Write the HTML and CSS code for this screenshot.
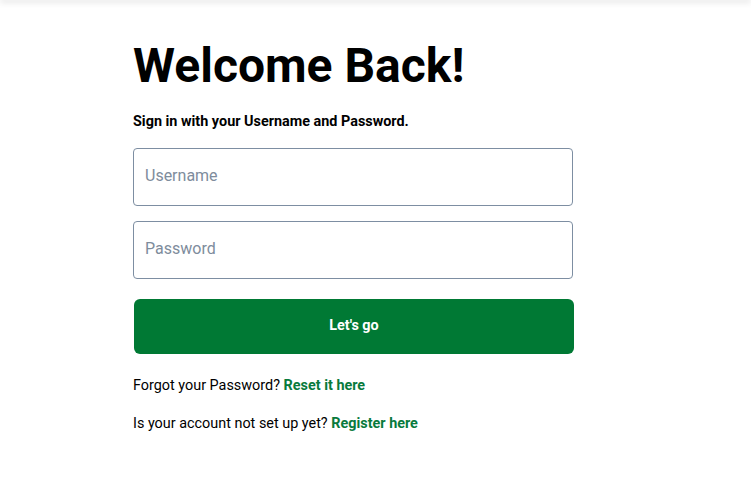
FILE: index.html
```html
<!DOCTYPE html>
<html lang="en">
<head>
<meta charset="utf-8">
<title>Sign in</title>
<link rel="stylesheet" href="styles.css">
</head>
<body>
<header class="topbar"></header>
<main class="page">
  <form class="login">
    <h1 class="title">Welcome Back!</h1>
    <p class="subtitle">Sign in with your Username and Password.</p>
    <input class="field" type="text" placeholder="Username">
    <input class="field" type="password" placeholder="Password">
    <button class="submit" type="button">Let's go</button>
    <p class="note">Forgot your Password? <a class="link" href="#">Reset it here</a></p>
    <p class="note">Is your account not set up yet? <a class="link" href="#">Register here</a></p>
  </form>
</main>
</body>
</html>
```
FILE: styles.css
```css
* { box-sizing: border-box; }
html, body { margin: 0; padding: 0; background: #fff; }
body { font-family: Roboto, "Liberation Sans", sans-serif; color: #000; }
.topbar {
  height: 1px;
  margin-top: -1px;
  box-shadow: 0 1px 6px rgba(0, 0, 0, 0.45);
}
.page { padding: 38px 0 0 133px; }
.login { width: 440px; display: flex; flex-direction: column; }
.title {
  margin: 0;
  font-size: 48px;
  font-weight: 700;
  line-height: 56px;
}
.subtitle {
  margin: 19px 0 17px;
  font-size: 14.4px;
  font-weight: 700;
  line-height: 18px;
}
.field {
  width: 440px;
  height: 58px;
  margin: 0 0 15px;
  padding: 0 11px 3px;
  border: 1px solid #7d8ea2;
  border-radius: 4px;
  font-family: inherit;
  font-size: 16px;
  color: #000;
  outline: none;
}
.field::placeholder { color: #7e8c9c; }
.submit {
  width: 440px;
  height: 55px;
  margin: 5px 0 0 1px;
  padding: 0 0 2px;
  border: none;
  border-radius: 6px;
  background: #007934;
  color: #fff;
  font-family: inherit;
  font-size: 14.4px;
  font-weight: 700;
  cursor: pointer;
}
.note {
  margin: 23px 0 0;
  font-size: 14.4px;
  line-height: 18px;
}
.note + .note { margin-top: 20px; }
.link { color: #087a3c; font-weight: 700; text-decoration: none; }
```
